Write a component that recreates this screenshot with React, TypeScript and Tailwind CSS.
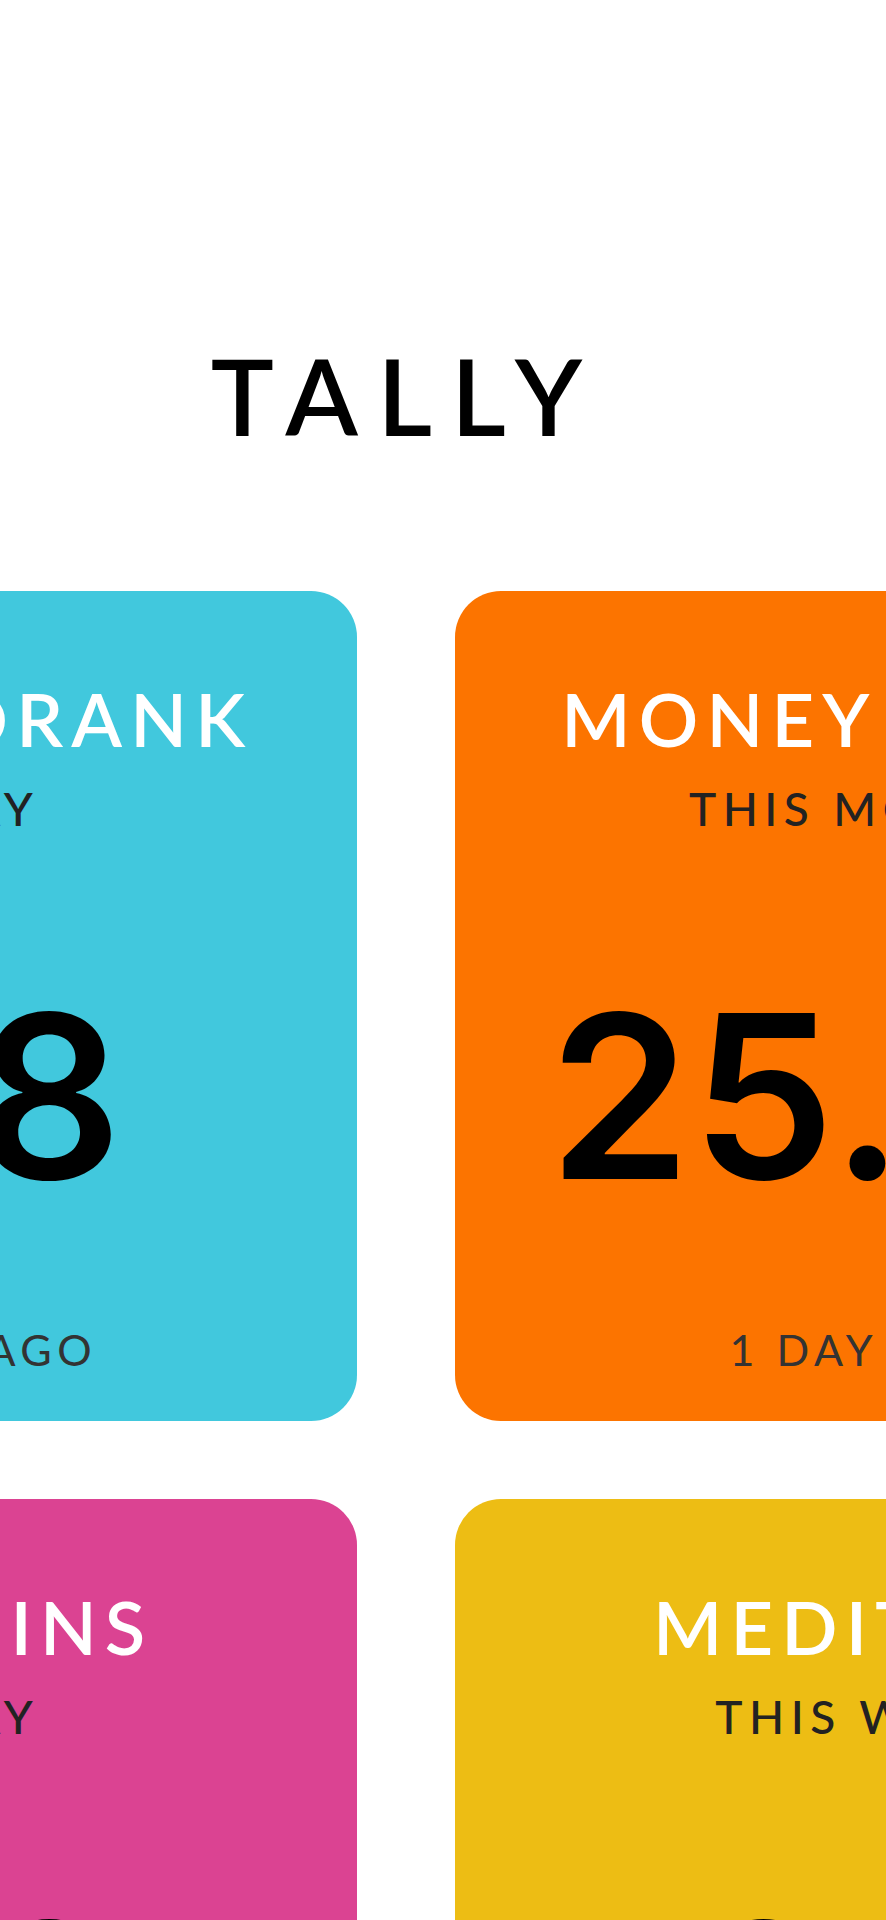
import React from 'react';

type Tally = {
    title: string;
    period: string;
    value: string;
    last: string;
    color: string;
};

const tallies: Tally[] = [
    { title: 'SODAS DRANK', period: 'TODAY', value: '1.8', last: '2 DAYS AGO', color: 'bg-[#41c8dd]' },
    { title: 'MONEY SPENT', period: 'THIS MONTH', value: '25.00', last: '1 DAY AGO', color: 'bg-[#fc7400]' },
    { title: 'VITAMINS', period: 'TODAY', value: '2.0', last: '2 DAYS AGO', color: 'bg-[#db4392]' },
    { title: 'MEDITATE', period: 'THIS WEEK', value: '3.5', last: '3 DAYS AGO', color: 'bg-[#edbd14]' },
];

function TallyCard({ tally }: { tally: Tally }) {
    return (
        <div className={`${tally.color} w-[822px] h-[830px] shrink-0 rounded-[46px] flex flex-col items-center pt-[91px]`}>
            <h2 className="text-[74px] leading-none font-semibold tracking-[0.11em] text-white whitespace-nowrap">
                {tally.title}
            </h2>
            <p className="mt-[30px] text-[46px] leading-none font-medium tracking-[0.14em] text-[#222] whitespace-nowrap">
                {tally.period}
            </p>
            {/* digits: Inter has the flat, geometric 2 and 5 */}
            <p className="mt-[150px] text-[228px] leading-none font-semibold tracking-[-0.01em] tabular-nums text-black whitespace-nowrap font-[Inter,sans-serif]">
                {tally.value}
            </p>
            <p className="mt-[118px] text-[43px] leading-none tracking-[0.13em] text-[#333] whitespace-nowrap">
                {tally.last}
            </p>
        </div>
    );
}

export default function App() {
    return (
        <div className="w-[886px] h-[1920px] overflow-hidden bg-white" style={{ fontFamily: 'Lato, "Noto Sans", sans-serif' }}>
            <div className="w-[1742px] ml-[-465px] flex flex-col items-center pt-[342px]">
                <h1 className="text-[106px] leading-none font-semibold tracking-[0.18em] text-black">TALLY</h1>

                <div className="mt-[143px] grid grid-cols-2 gap-x-[98px] gap-y-[78px]">
                    {tallies.map((t) => (
                        <TallyCard key={t.title} tally={t} />
                    ))}
                </div>
            </div>
        </div>
    );
}
